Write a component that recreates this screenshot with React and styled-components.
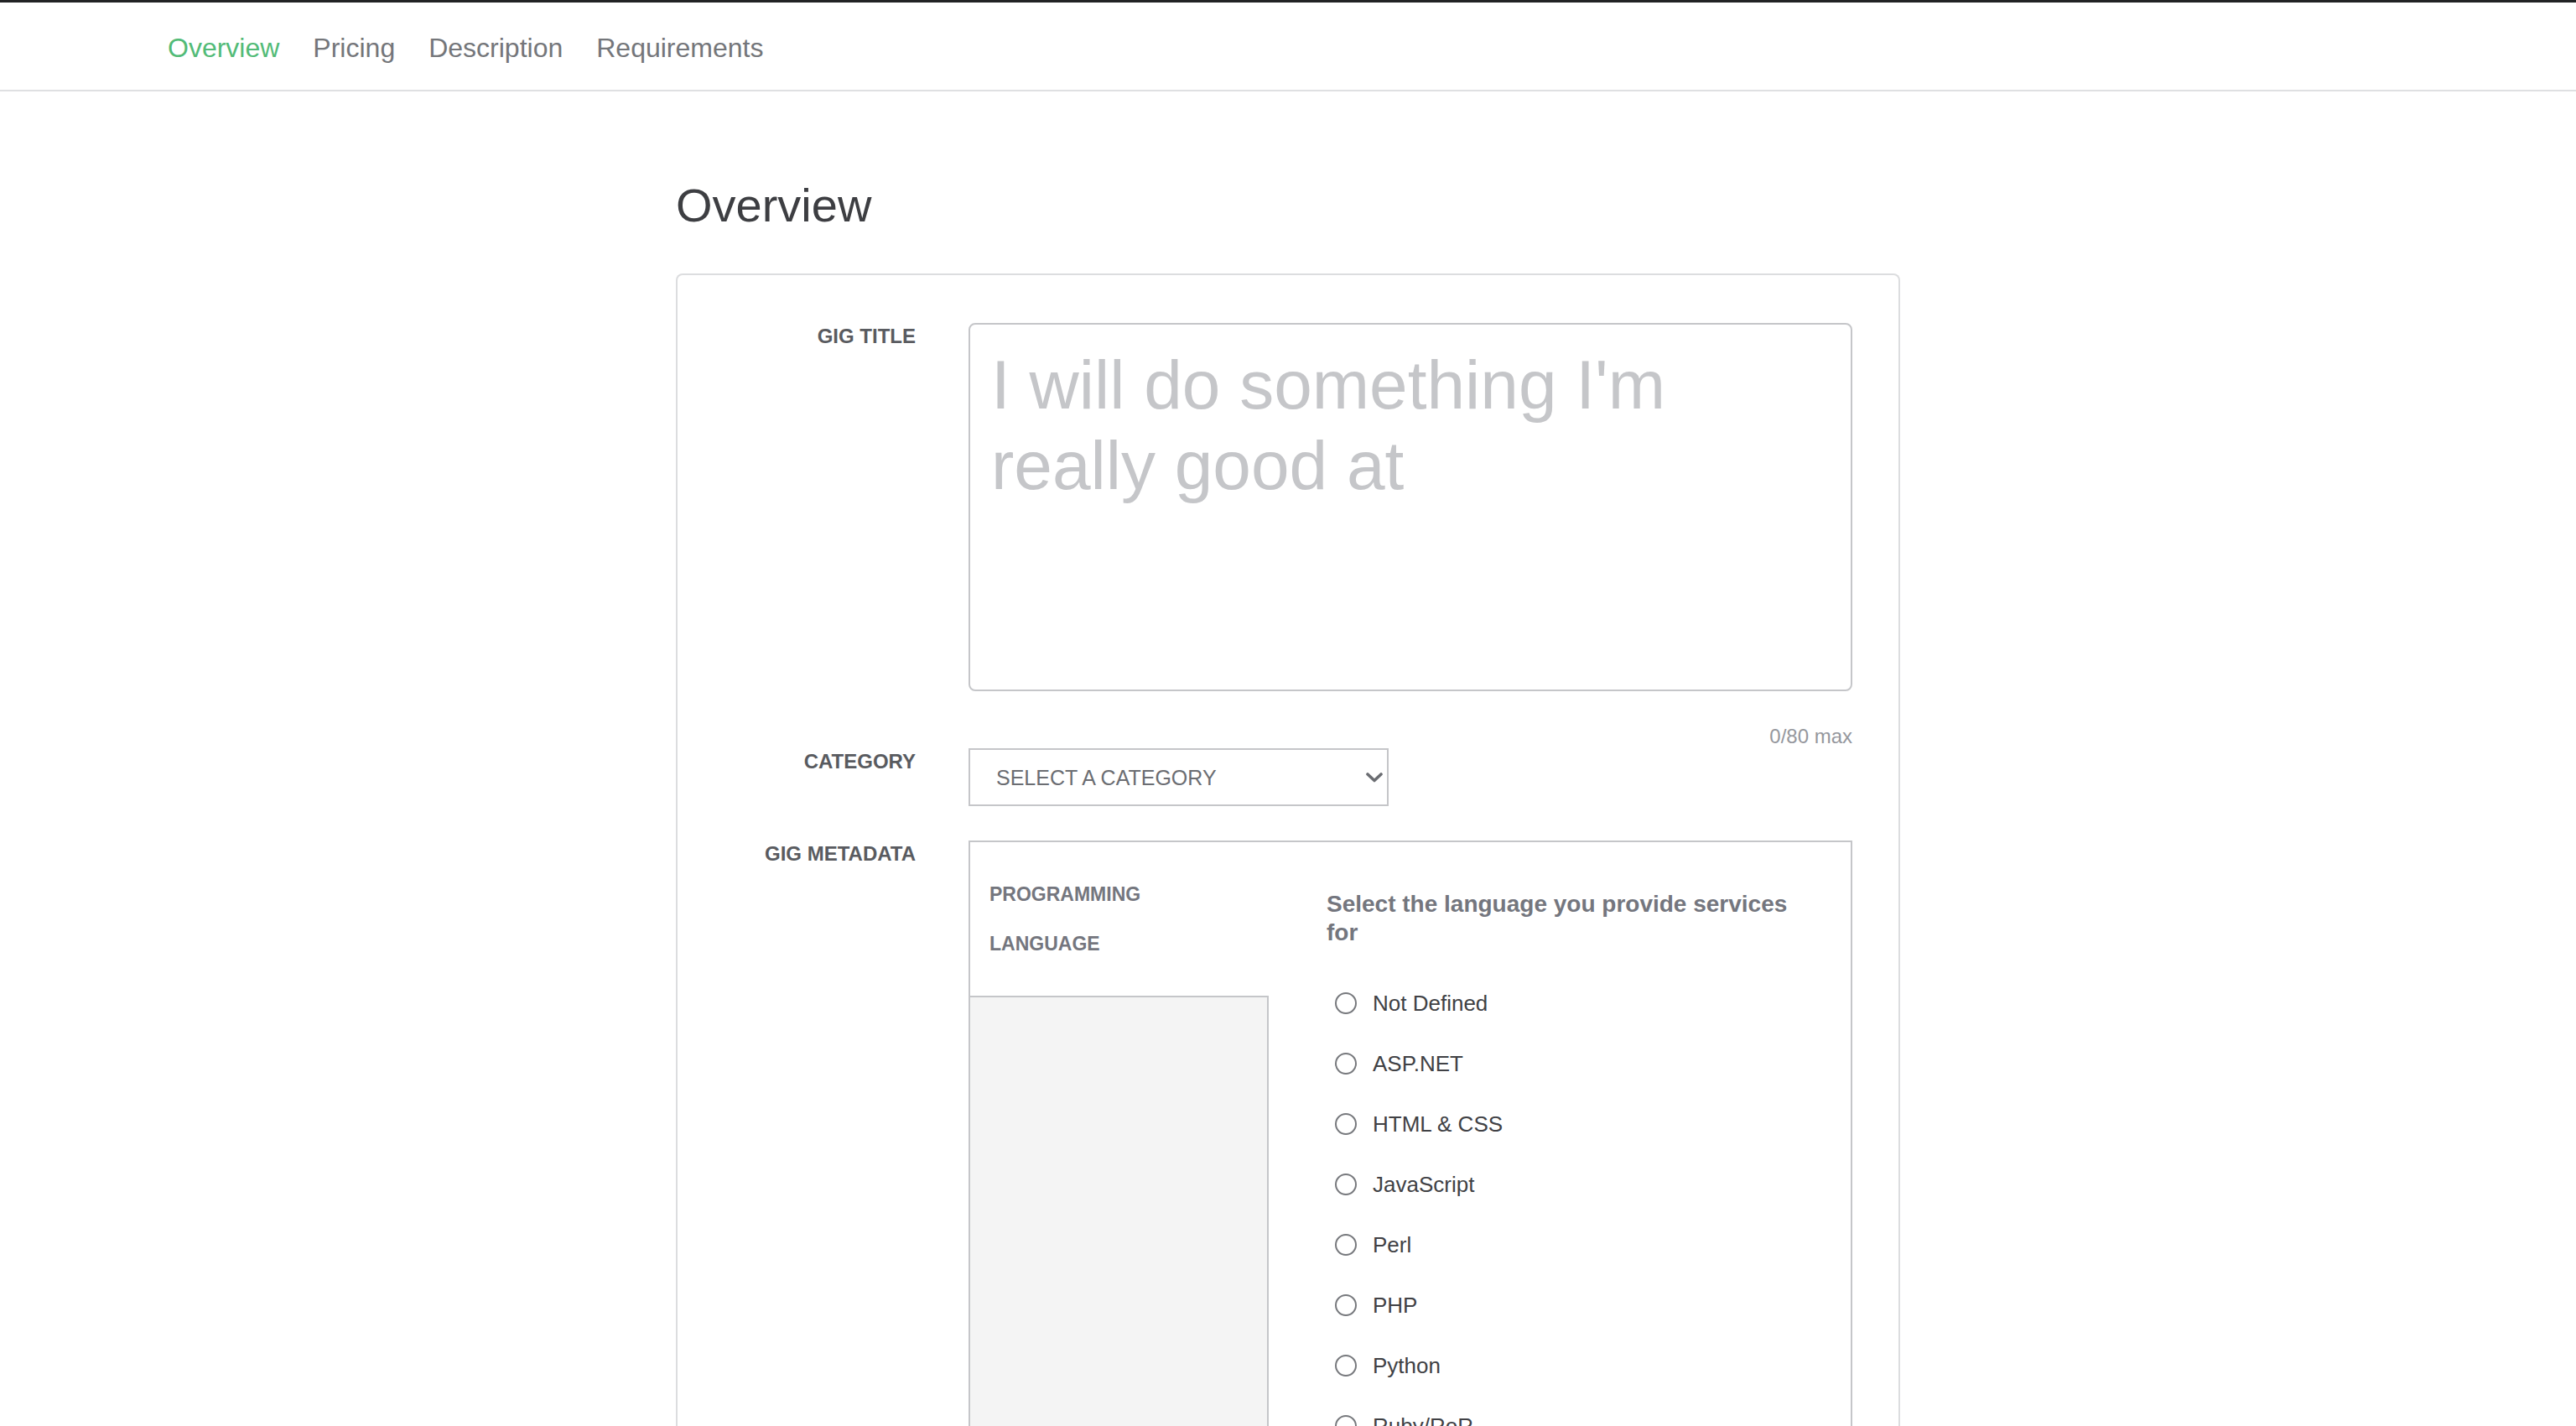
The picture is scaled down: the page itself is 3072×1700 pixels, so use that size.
import React from "react";
import styled, { createGlobalStyle } from "styled-components";

const Global = createGlobalStyle`
  html, body { margin: 0; padding: 0; background: #fff; }
  body { font-family: "Liberation Sans", Arial, Helvetica, sans-serif; }
  * { box-sizing: border-box; }
`;

const TopBar = styled.div`
  height: 3px;
  background: #222325;
`;

const Nav = styled.nav`
  display: flex;
  align-items: center;
  gap: 40px;
  height: 106px;
  padding: 3px 0 0 200px;
  border-bottom: 2px solid #dfe0e2;
`;

const NavLink = styled.a`
  font-size: 32px;
  line-height: 40px;
  color: ${(p) => (p.$active ? "#52bb77" : "#74767a")};
  text-decoration: none;
  cursor: pointer;
`;

const Main = styled.main`
  width: 1460px;
  margin: 0 auto;
  padding-top: 108px;
`;

const PageTitle = styled.h1`
  margin: 0 0 53px;
  font-size: 56px;
  line-height: 56px;
  font-weight: 400;
  color: #3d3e42;
`;

const Card = styled.section`
  border: 2px solid #dcdddf;
  border-bottom: none;
  border-radius: 8px 8px 0 0;
  padding: 57px 55px 0 0;
`;

const FormRow = styled.div`
  display: grid;
  grid-template-columns: 284px 1054px;
  column-gap: 63px;
  margin-bottom: ${(p) => p.$mb || 0}px;
`;

const Label = styled.label`
  text-align: right;
  padding-top: 2px;
  font-size: 24px;
  line-height: 28px;
  font-weight: 700;
  color: #595b60;
  text-transform: uppercase;
`;

const Field = styled.div`
  display: flex;
  flex-direction: column;
`;

const TitleInput = styled.textarea`
  width: 1054px;
  height: 439px;
  border: 2px solid #c5c6c9;
  border-radius: 8px;
  padding: 24px 25px;
  font-family: inherit;
  font-size: 82px;
  line-height: 96px;
  color: #404145;
  resize: none;
  overflow: hidden;
  outline: none;
  &::placeholder { color: #c5c6c9; }
`;

const Counter = styled.div`
  margin-top: 40px;
  text-align: right;
  font-size: 24px;
  line-height: 28px;
  color: #95979d;
`;

const SelectWrap = styled.div`
  position: relative;
  width: 501px;
  height: 69px;
`;

const Select = styled.select`
  appearance: none;
  -webkit-appearance: none;
  width: 100%;
  height: 100%;
  border: 2px solid #c5c6c9;
  border-radius: 0;
  background: #fff;
  padding: 0 40px 0 31px;
  font-family: inherit;
  font-size: 25px;
  color: #6b6d72;
  text-transform: uppercase;
  outline: none;
`;

const Chevron = styled.svg`
  position: absolute;
  right: 7px;
  top: 50%;
  width: 20px;
  height: 12px;
  transform: translateY(-50%);
  pointer-events: none;
`;

const MetaBox = styled.div`
  display: grid;
  grid-template-columns: 356px 1fr;
  border: 2px solid #c5c6c9;
  border-bottom: none;
`;

const MetaSide = styled.div`
  display: flex;
  flex-direction: column;
`;

const MetaTitle = styled.div`
  padding: 33px 23px 32px;
  font-size: 23px;
  line-height: 59px;
  font-weight: 700;
  color: #74767e;
  text-transform: uppercase;
`;

const GrayPanel = styled.div`
  flex: 1;
  background: #f4f4f4;
  border-top: 2px solid #c5c6c9;
  border-right: 2px solid #c5c6c9;
`;

const MetaMain = styled.div`
  padding: 57px 60px 40px 69px;
`;

const Question = styled.h3`
  margin: 0;
  font-size: 28px;
  line-height: 34px;
  font-weight: 700;
  color: #74767e;
`;

const OptionList = styled.div`
  margin-top: 31px;
  display: flex;
  flex-direction: column;
`;

const Option = styled.label`
  display: flex;
  align-items: center;
  gap: 19px;
  height: 72px;
  font-size: 26px;
  color: #404145;
  cursor: pointer;
`;

const Radio = styled.input`
  appearance: none;
  -webkit-appearance: none;
  width: 26px;
  height: 26px;
  margin: 0 0 0 10px;
  border: 2px solid #77797d;
  border-radius: 50%;
  background: #fff;
  flex: none;
`;

const navItems = ["Overview", "Pricing", "Description", "Requirements"];
const languages = [
  "Not Defined",
  "ASP.NET",
  "HTML & CSS",
  "JavaScript",
  "Perl",
  "PHP",
  "Python",
  "Ruby/RoR",
  "Java",
  "C#",
];

export default function App() {
  return (
    <>
      <Global />
      <TopBar />
      <Nav>
        {navItems.map((item, i) => (
          <NavLink key={item} $active={i === 0}>
            {item}
          </NavLink>
        ))}
      </Nav>
      <Main>
        <PageTitle>Overview</PageTitle>
        <Card>
          <FormRow>
            <Label>Gig Title</Label>
            <Field>
              <TitleInput placeholder="I will do something I'm really good at" />
              <Counter>0/80 max</Counter>
            </Field>
          </FormRow>
          <FormRow $mb={41}>
            <Label>Category</Label>
            <Field>
              <SelectWrap>
                <Select defaultValue="">
                  <option value="">Select a category</option>
                  <option value="prog">Programming &amp; Tech</option>
                </Select>
                <Chevron viewBox="0 0 20 12">
                  <path
                    d="M2 2 L10 9.5 L18 2"
                    fill="none"
                    stroke="#6b6d72"
                    strokeWidth="3.6"
                    strokeLinecap="round"
                    strokeLinejoin="round"
                  />
                </Chevron>
              </SelectWrap>
            </Field>
          </FormRow>
          <FormRow>
            <Label>Gig Metadata</Label>
            <Field>
              <MetaBox>
                <MetaSide>
                  <MetaTitle>Programming Language</MetaTitle>
                  <GrayPanel />
                </MetaSide>
                <MetaMain>
                  <Question>Select the language you provide services for</Question>
                  <OptionList>
                    {languages.map((lang) => (
                      <Option key={lang}>
                        <Radio type="radio" name="lang" value={lang} />
                        {lang}
                      </Option>
                    ))}
                  </OptionList>
                </MetaMain>
              </MetaBox>
            </Field>
          </FormRow>
        </Card>
      </Main>
    </>
  );
}
